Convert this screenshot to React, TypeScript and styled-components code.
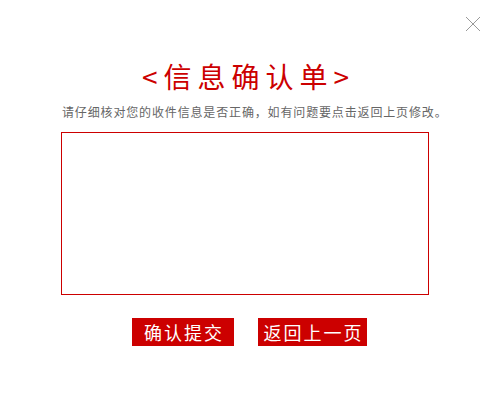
import * as React from 'react';
import styled, { createGlobalStyle } from 'styled-components';

const GlobalStyle = createGlobalStyle`
  html, body {
    margin: 0;
    padding: 0;
    background: #fff;
  }
  body {
    font-family: "Noto Sans CJK SC", "Noto Sans", sans-serif;
  }
`;

const Dialog = styled.div`
  position: relative;
  width: 500px;
  height: 400px;
  background: #fff;
  display: flex;
  flex-direction: column;
  align-items: flex-start;
  padding: 57px 0 0 61px;
  box-sizing: border-box;
`;

const CloseButton = styled.button`
  position: absolute;
  top: 16px;
  right: 19px;
  width: 16px;
  height: 16px;
  padding: 0;
  border: 0;
  background: none;
  cursor: pointer;
`;

const Title = styled.h2`
  margin: 0 0 0 81px;
  color: #cc0000;
  font-size: 28px;
  font-weight: 400;
  line-height: 38px;
  letter-spacing: 6px;
  white-space: nowrap;
`;

const Hint = styled.p`
  margin: 9px 0 0 1px;
  color: #666;
  font-size: 12px;
  line-height: 16px;
  letter-spacing: 0.85px;
  white-space: nowrap;
`;

const InfoBox = styled.div`
  margin-top: 12px;
  width: 366px;
  height: 161px;
  border: 1px solid #cc0000;
`;

const ButtonRow = styled.div`
  display: flex;
  gap: 24px;
  margin: 23px 0 0 71px;
`;

const RedButton = styled.button<{ $width: number }>`
  width: ${(p) => p.$width}px;
  height: 28px;
  padding: 0 0 0 2px;
  border: 0;
  background: #cc0000;
  color: #fff;
  font-family: "Noto Sans CJK SC", "Noto Sans", sans-serif;
  font-size: 18px;
  line-height: 28px;
  letter-spacing: 2px;
  text-align: center;
  cursor: pointer;
`;

const App = () => {
  return (
    <>
      <GlobalStyle />
      <Dialog>
        <CloseButton aria-label="关闭">
          <svg width="16" height="16" viewBox="0 0 16 16">
            <path d="M1 1 L15 15 M15 1 L1 15" stroke="#999" strokeWidth="1" fill="none" />
          </svg>
        </CloseButton>
        <Title>{'<信息确认单>'}</Title>
        <Hint>请仔细核对您的收件信息是否正确，如有问题要点击返回上页修改。</Hint>
        <InfoBox />
        <ButtonRow>
          <RedButton $width={102}>确认提交</RedButton>
          <RedButton $width={109}>返回上一页</RedButton>
        </ButtonRow>
      </Dialog>
    </>
  );
};

export default App;
